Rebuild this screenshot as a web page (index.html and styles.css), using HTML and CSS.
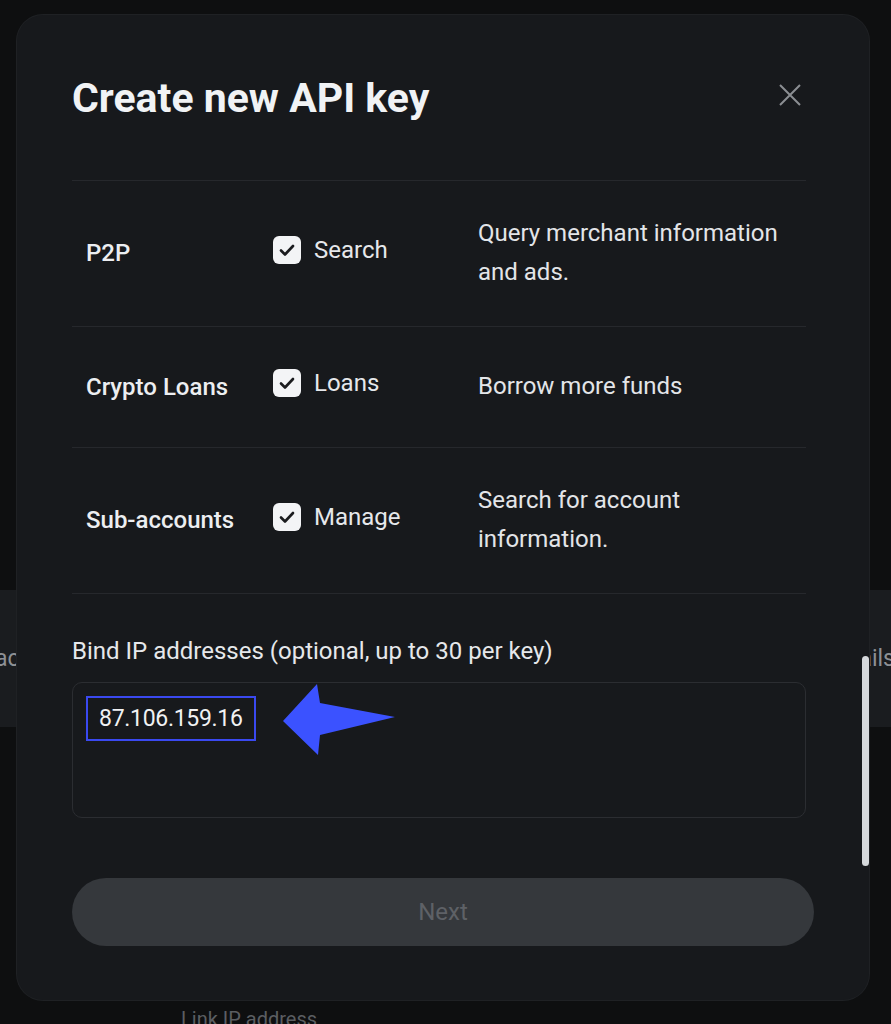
FILE: index.html
```html
<!DOCTYPE html>
<html>
<head>
    <title>Create new API key</title>
    <link rel="stylesheet" href="styles.css">
</head>
<body>
    <div class="backdrop">
        <div class="back-row">
            <span class="back-left">ace</span>
            <span class="back-right">Details</span>
        </div>
        <div class="back-foot">Link IP address</div>
    </div>

    <div class="modal">
        <div class="modal-head">
            <h1>Create new API key</h1>
            <button class="close" aria-label="Close">
                <svg width="22" height="22" viewBox="0 0 22 22">
                    <path d="M1 1 L21 21 M21 1 L1 21" stroke="#8b8e92" stroke-width="2" fill="none"/>
                </svg>
            </button>
        </div>

        <div class="perms">
            <div class="perm-row tall">
                <div class="perm-name">P2P</div>
                <label class="perm-check"><span class="box"><svg viewBox="0 0 28 28"><path d="M8 14.5 L12 18.5 L20 10" /></svg></span>Search</label>
                <div class="perm-desc">Query merchant information<br>and ads.</div>
            </div>
            <div class="perm-row">
                <div class="perm-name">Crypto Loans</div>
                <label class="perm-check"><span class="box"><svg viewBox="0 0 28 28"><path d="M8 14.5 L12 18.5 L20 10" /></svg></span>Loans</label>
                <div class="perm-desc">Borrow more funds</div>
            </div>
            <div class="perm-row tall">
                <div class="perm-name">Sub-accounts</div>
                <label class="perm-check"><span class="box"><svg viewBox="0 0 28 28"><path d="M8 14.5 L12 18.5 L20 10" /></svg></span>Manage</label>
                <div class="perm-desc">Search for account<br>information.</div>
            </div>
        </div>

        <div class="bind-label">Bind IP addresses (optional, up to 30 per key)</div>
        <div class="ip-field">
            <span class="ip-chip">87.106.159.16</span>
            <svg class="pointer" width="116" height="75" viewBox="0 0 116 75">
                <polygon points="1,38 35,1 38,20 113,34 38,52 36,72" fill="#3b52ff"/>
            </svg>
        </div>

        <button class="next">Next</button>

        <div class="scrollbar"></div>
    </div>
</body>
</html>
```

FILE: styles.css
```css
body {
    margin: 0;
    width: 891px;
    height: 1024px;
    overflow: hidden;
    position: relative;
    background: #0e0f10;
    font-family: Roboto, "Liberation Sans", sans-serif;
}

/* page behind the dialog */
.backdrop {
    padding-top: 590px;
}

.back-row {
    height: 137px;
    background: #1a1c1f;
    display: flex;
    justify-content: space-between;
    align-items: center;
    color: #8d9094;
    font-size: 23px;
}

.back-left {
    margin-left: -5px;
}

.back-right {
    margin-right: -4px;
}

.back-foot {
    margin-top: 280px;
    padding-left: 181px;
    font-size: 20px;
    color: #5b5e62;
}

/* dialog */
.modal {
    position: absolute;
    left: 17px;
    top: 15px;
    width: 852px;
    height: 985px;
    box-sizing: border-box;
    padding: 59px 0 0 55px;
    background: #17191c;
    border-radius: 26px;
    box-shadow: 0 0 0 1px #1f2124;
}

.modal-head {
    width: 729px;
    display: flex;
    justify-content: space-between;
    align-items: flex-start;
}

.modal-head h1 {
    margin: 0;
    font-size: 41px;
    line-height: 48px;
    font-weight: 700;
    color: #f1f3f5;
}

.close {
    margin-top: 10px;
    padding: 0;
    border: none;
    background: none;
    width: 22px;
    height: 22px;
    cursor: pointer;
}

.close svg {
    display: block;
}

.perms {
    width: 734px;
    margin-top: 58px;
    border-bottom: 1px solid #26282c;
}

.perm-row {
    display: grid;
    grid-template-columns: 187px 205px 1fr;
    align-items: center;
    box-sizing: border-box;
    min-height: 121px;
    padding: 33px 0 34px 14px;
    border-top: 1px solid #26282c;
    font-size: 24px;
}

.perm-name {
    font-weight: 500;
    color: #eceef1;
}

.perm-check {
    display: flex;
    align-items: center;
    gap: 13px;
    margin-bottom: 7px;
    color: #e6e8eb;
}

.box {
    width: 28px;
    height: 28px;
    border-radius: 6px;
    background: #f3f4f6;
}

.box svg {
    display: block;
    width: 28px;
    height: 28px;
}

.box path {
    fill: none;
    stroke: #1b1c1f;
    stroke-width: 2.6;
    stroke-linecap: round;
    stroke-linejoin: round;
}

.perm-desc {
    line-height: 39px;
    color: #e3e5e8;
}

.bind-label {
    margin-top: 43px;
    font-size: 24px;
    line-height: 28px;
    color: #e6e8eb;
}

.ip-field {
    position: relative;
    margin-top: 17px;
    width: 734px;
    height: 136px;
    box-sizing: border-box;
    padding: 13px;
    border: 1px solid #2b2d31;
    border-radius: 10px;
}

.ip-chip {
    display: inline-block;
    padding: 8px 11px;
    border: 2px solid #3a49f0;
    font-size: 23px;
    line-height: 25px;
    letter-spacing: -0.3px;
    color: #f0f1f3;
}

.pointer {
    position: absolute;
    left: 209px;
    top: 0;
}

.next {
    display: block;
    margin-top: 60px;
    width: 742px;
    height: 68px;
    border: none;
    border-radius: 34px;
    background: #35383c;
    color: #5e6166;
    font-family: inherit;
    font-size: 24px;
}

.scrollbar {
    position: absolute;
    left: 845px;
    top: 641px;
    width: 7px;
    height: 210px;
    border-radius: 4px;
    background: #d6d9dc;
}
```
